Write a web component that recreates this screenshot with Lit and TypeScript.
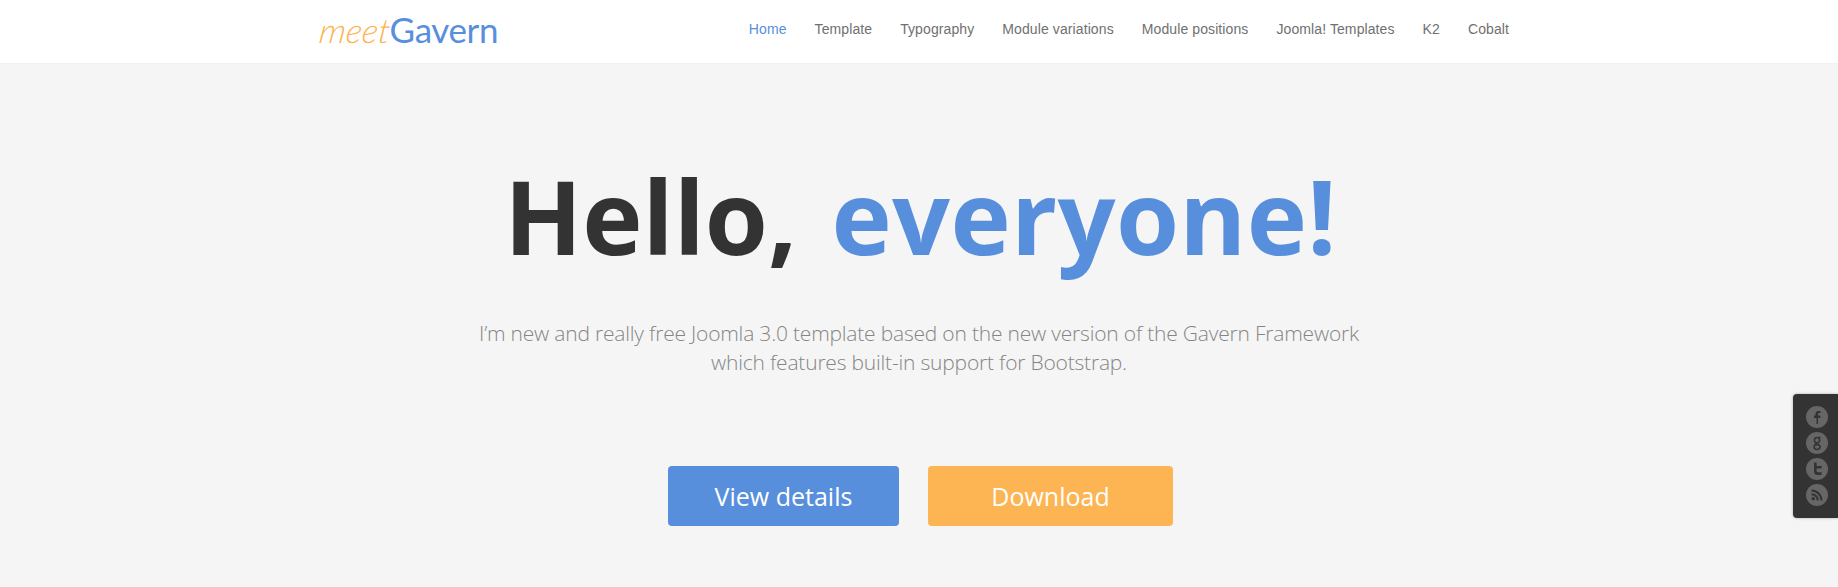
import { LitElement, html, css } from 'lit';
import { customElement } from 'lit/decorators.js';

const NAV = [
  'Home',
  'Template',
  'Typography',
  'Module variations',
  'Module positions',
  'Joomla! Templates',
  'K2',
  'Cobalt',
];

@customElement('app-root')
export class AppRoot extends LitElement {
  static styles = css`
    :host {
      display: block;
      position: relative;
      height: 587px;
      overflow: hidden;
      background: #f5f5f5;
    }

    .header {
      background: #fff;
      height: 64px;
      border-bottom: 1px solid #f1f1f1;
      box-sizing: border-box;
    }

    .container {
      width: 1200px;
      height: 100%;
      margin: 0 auto;
      display: flex;
      align-items: center;
      justify-content: space-between;
    }

    .logo {
      display: flex;
      align-items: baseline;
      line-height: 1;
      margin: 0 0 5px 1px;
    }

    .logo .meet {
      font: italic 300 34px 'Lato', sans-serif;
      color: #fdb452;
      letter-spacing: 0.2px;
      transform: skewX(-8deg);
    }

    .logo .gavern {
      font: 400 35px 'Lato', sans-serif;
      color: #588fdd;
      letter-spacing: -0.4px;
      margin-left: -1px;
    }

    .nav {
      display: flex;
      gap: 28px;
      padding-right: 10px;
      margin-bottom: 5px;
      font: 14px 'Liberation Sans', sans-serif;
      letter-spacing: 0.1px;
      color: #707070;
    }

    .nav .active {
      color: #588fdd;
    }

    .hero {
      display: flex;
      flex-direction: column;
      align-items: center;
      text-align: center;
    }

    h1 {
      margin: 87px 0 0 3px;
      font: 700 102px/130px 'Open Sans', sans-serif;
      word-spacing: 8px;
      color: #333;
      white-space: pre;
    }

    h1 span {
      color: #588fdd;
      letter-spacing: 0.3px;
    }

    p {
      margin: 38px 0 0;
      font: 300 21px/29px 'Open Sans', sans-serif;
      letter-spacing: -0.2px;
      color: #858585;
    }

    .buttons {
      display: flex;
      gap: 29px;
      margin: 89px 0 0 3px;
    }

    .btn {
      display: flex;
      align-items: center;
      justify-content: center;
      height: 60px;
      border-radius: 4px;
      color: #fff;
      font: 400 25px 'Open Sans', sans-serif;
    }

    .btn.blue {
      width: 231px;
      background: #588fdd;
    }

    .btn.orange {
      width: 245px;
      background: #fdb452;
    }

    .social {
      position: absolute;
      top: 394px;
      right: 0;
      width: 45px;
      height: 124px;
      box-sizing: border-box;
      padding: 12px 0 0 13px;
      background: #333;
      border-radius: 4px 0 0 4px;
      box-shadow: 0 0 3px rgba(0, 0, 0, 0.3);
      display: flex;
      flex-direction: column;
      gap: 4px;
    }

    .social svg {
      display: block;
      width: 22px;
      height: 22px;
    }
  `;

  render() {
    return html`
      <div class="header">
        <div class="container">
          <div class="logo">
            <span class="meet">meet</span><span class="gavern">Gavern</span>
          </div>
          <div class="nav">
            ${NAV.map(
              (item, i) => html`<span class=${i === 0 ? 'active' : ''}>${item}</span>`,
            )}
          </div>
        </div>
      </div>
      <div class="hero">
        <h1>Hello, <span>everyone!</span></h1>
        <p>
          I’m new and really free Joomla 3.0 template based on the new version of the Gavern Framework<br />
          which features built-in support for Bootstrap.
        </p>
        <div class="buttons">
          <div class="btn blue">View details</div>
          <div class="btn orange">Download</div>
        </div>
      </div>
      <div class="social">
        <svg viewBox="0 0 22 22">
          <circle cx="11" cy="11" r="11" fill="#666" />
          <path d="M12 18v-6h2.2l.3-2.4H12V8.2c0-.7.2-1.1 1.2-1.1h1.3V5c-.3 0-1-.1-1.9-.1-1.9 0-3.1 1.1-3.1 3.1v1.6H8V12h2.500v6z" fill="#333" />
        </svg>
        <svg viewBox="0 0 22 22">
          <circle cx="11" cy="11" r="11" fill="#666" />
          <g fill="none" stroke="#333" stroke-width="1.5">
            <circle cx="11" cy="8.2" r="2.6" />
            <ellipse cx="11" cy="15" rx="3" ry="2.4" />
            <path d="M11 10.8c-2 .6-1.5 2 0 2.2M12.5 5.5h2" />
          </g>
        </svg>
        <svg viewBox="0 0 22 22">
          <circle cx="11" cy="11" r="11" fill="#666" />
          <path d="M8 4.5h2.6v3.4h5v2.6h-5v2.2c0 1 .5 1.5 1.6 1.5h3.4v2.800h-4.200C9.300 17 8 15.700 8 13.500z" fill="#333" />
        </svg>
        <svg viewBox="0 0 22 22">
          <circle cx="11" cy="11" r="11" fill="#666" />
          <circle cx="7.200" cy="14.800" r="1.700" fill="#333" />
          <path d="M5.500 10.200a6.300 6.300 0 0 1 6.300 6.300M5.500 6.500a10 10 0 0 1 10 10" fill="none" stroke="#333" stroke-width="2" />
        </svg>
      </div>
    `;
  }
}
